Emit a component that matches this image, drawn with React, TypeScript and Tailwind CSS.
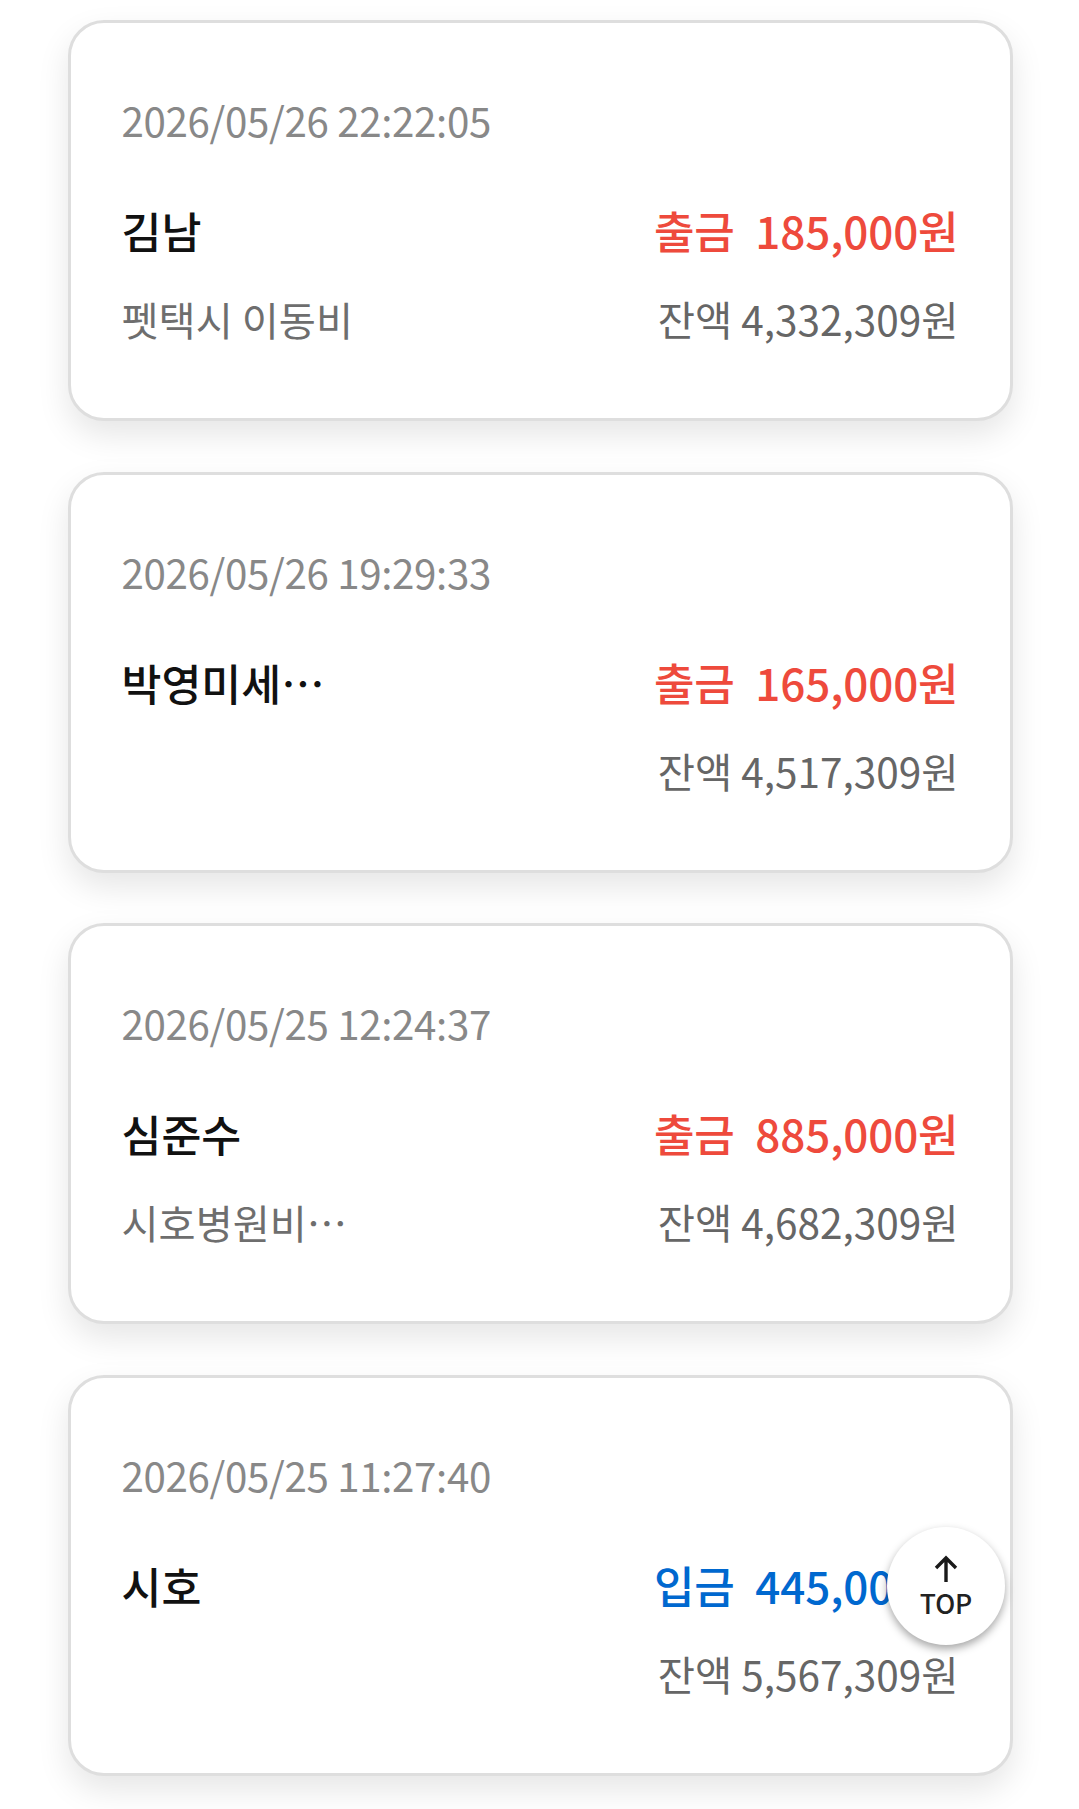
const items = [
  { date: "2026/05/26 22:22:05", name: "김남", memo: "펫택시 이동비", type: "출금", amount: "185,000원", balance: "잔액 4,332,309원" },
  { date: "2026/05/26 19:29:33", name: "박영미세…", memo: "", type: "출금", amount: "165,000원", balance: "잔액 4,517,309원" },
  { date: "2026/05/25 12:24:37", name: "심준수", memo: "시호병원비…", type: "출금", amount: "885,000원", balance: "잔액 4,682,309원" },
  { date: "2026/05/25 11:27:40", name: "시호", memo: "", type: "입금", amount: "445,000원", balance: "잔액 5,567,309원" },
];

export default function App() {
  return (
    <div className="relative w-[1079px] h-[1809px] overflow-hidden bg-white font-['Noto_Sans_CJK_KR',sans-serif]">
      <div className="flex flex-col gap-[50.7px] pt-[20px] pl-[68px] pr-[66px]">
        {items.map((item) => (
          <div
            key={item.date}
            className="h-[401px] shrink-0 rounded-[36px] border-[3px] border-[#dedede] bg-white pl-[50.5px] pr-[51.5px] pt-[72px] shadow-[0_14px_32px_rgba(0,0,0,0.1)]"
          >
            <div className="text-[40.3px] leading-[50px] tracking-[-0.35px] text-[#888888]">{item.date}</div>
            <div className="mt-[55px] flex h-[60px] items-center justify-between">
              <span className="text-[43.4px] font-medium leading-[60px] text-[#111111]">{item.name}</span>
              <span className={`text-[44px] font-medium leading-[60px] tracking-[-0.4px] ${item.type === "출금" ? "text-[#ee4a3c]" : "text-[#0068cf]"}`}>
                {item.type}
                <span className="ml-[21px] tracking-[-0.1px]">{item.amount}</span>
              </span>
            </div>
            <div className="mt-[34px] flex h-[50px] items-center justify-between">
              <span className="text-[40.3px] leading-[50px] text-[#6e6e6e]">{item.memo}</span>
              <span className="text-[40.5px] leading-[50px] text-[#666666]">{item.balance}</span>
            </div>
          </div>
        ))}
      </div>

      <button className="absolute left-[887px] top-[1527px] flex h-[118px] w-[118px] flex-col items-center justify-center rounded-full bg-white shadow-[0_4px_9px_rgba(0,0,0,0.35)]">
        <svg width="24" height="27" viewBox="0 0 24 27" fill="none" stroke="#1a1a1a" strokeWidth="3.4">
          <path d="M12 27V3M2 13L12 3l10 10" />
        </svg>
        <span className="mt-[6px] text-[26.5px] font-medium leading-[30px] text-[#222222]">TOP</span>
      </button>
    </div>
  );
}
